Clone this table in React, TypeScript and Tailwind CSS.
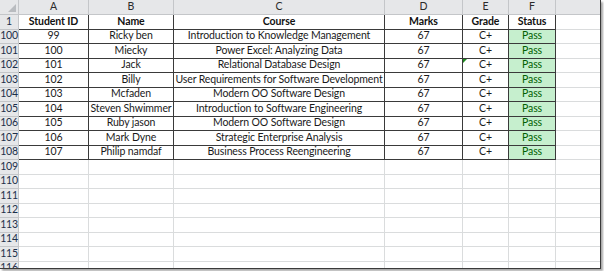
import React from "react";

const widths = ["w-[70px]", "w-[85px]", "w-[211px]", "w-[78px]", "w-[46px]", "w-[47px]"];
const letters = ["A", "B", "C", "D", "E", "F"];

const data: string[][] = [
  ["99", "Ricky ben", "Introduction to Knowledge Management", "67", "C+", "Pass"],
  ["100", "Miecky", "Power Excel: Analyzing Data", "67", "C+", "Pass"],
  ["101", "Jack", "Relational Database Design", "67", "C+", "Pass"],
  ["102", "Billy", "User Requirements for Software Development", "67", "C+", "Pass"],
  ["103", "Mcfaden", "Modern OO Software Design", "67", "C+", "Pass"],
  ["104", "Steven Shwimmer", "Introduction to Software Engineering", "67", "C+", "Pass"],
  ["105", "Ruby jason", "Modern OO Software Design", "67", "C+", "Pass"],
  ["106", "Mark Dyne", "Strategic Enterprise Analysis", "67", "C+", "Pass"],
  ["107", "Philip namdaf", "Business Process Reengineering", "67", "C+", "Pass"],
];

const header = ["Student ID", "Name", "Course", "Marks", "Grade", "Status"];

function RowHeader({ n }: { n: string }) {
  return (
    <div className="w-[19px] shrink-0 h-full bg-[#e6e7e9] border-r border-b border-[#c4c6c9] flex items-center justify-center text-[10.5px] text-[#1c2f4a] tracking-[-0.3px]">
      {n}
    </div>
  );
}

export default function App() {
  const empty = ["109", "110", "111", "112", "113", "114", "115", "116"];
  return (
    <div className="w-[604px] h-[271px] bg-white" style={{ fontFamily: 'Lato, "Liberation Sans", Arial, sans-serif' }}>
      <div className="w-[601px] h-[269px] overflow-hidden bg-white border-r border-b border-[#3a3a3a] shadow-[2px_2px_2px_rgba(0,0,0,0.35)] box-border">
        {/* column headers */}
        <div className="flex h-[15px]">
          <div className="relative w-[19px] shrink-0 h-full bg-[#e6e7e9] border-r border-b border-[#c4c6c9]">
            <svg className="absolute right-[2px] bottom-[2px]" width="8" height="8" viewBox="0 0 8 8">
              <polygon points="8,0 8,8 0,8" fill="#b9bcc0" />
            </svg>
          </div>
          {letters.map((l, i) => (
            <div
              key={l}
              className={`${widths[i]} shrink-0 h-full bg-[#e6e7e9] border-r border-b border-[#c4c6c9] flex items-center justify-center text-[10.5px] text-[#2a2a2a]`}
            >
              {l}
            </div>
          ))}
          <div className="flex-1 h-full bg-[#e6e7e9] border-b border-[#c4c6c9]" />
        </div>

        {/* header row 1 */}
        <div className="flex h-[14.5px]">
          <RowHeader n="1" />
          {header.map((h, i) => (
            <div
              key={h}
              className={`${widths[i]} shrink-0 h-full border-r border-b border-[#3a3a3a] flex items-center justify-center text-[10.5px] font-bold text-[#111] tracking-[-0.1px]`}
            >
              {h}
            </div>
          ))}
          <div className="flex-1 h-full border-b border-[#dadcdd]" />
        </div>

        {data.map((row, r) => (
          <div key={r} className="flex h-[14.5px]">
            <RowHeader n={String(100 + r)} />
            {row.map((c, i) => {
              const pass = i === 5;
              return (
                <div
                  key={i}
                  className={`${widths[i]} relative shrink-0 h-full border-r border-b border-[#3a3a3a] flex items-center justify-center text-[10.5px] tracking-[-0.12px] whitespace-nowrap overflow-hidden ${
                    pass ? "bg-[#c6efce] text-[#006100]" : "text-[#1a1a1a]"
                  }`}
                >
                  {r === 2 && i === 4 && (
                    <span className="absolute left-0 top-0 w-0 h-0 border-t-[4px] border-r-[4px] border-t-[#1f8a1f] border-r-transparent" />
                  )}
                  {c}
                </div>
              );
            })}
            <div className="flex-1 h-full border-b border-[#dadcdd]" />
          </div>
        ))}

        {empty.map((n) => (
          <div key={n} className="flex h-[14.5px]">
            <RowHeader n={n} />
            {widths.map((w, i) => (
              <div key={i} className={`${w} shrink-0 h-full border-r border-b border-[#dadcdd]`} />
            ))}
            <div className="flex-1 h-full border-b border-[#dadcdd]" />
          </div>
        ))}
      </div>
    </div>
  );
}
